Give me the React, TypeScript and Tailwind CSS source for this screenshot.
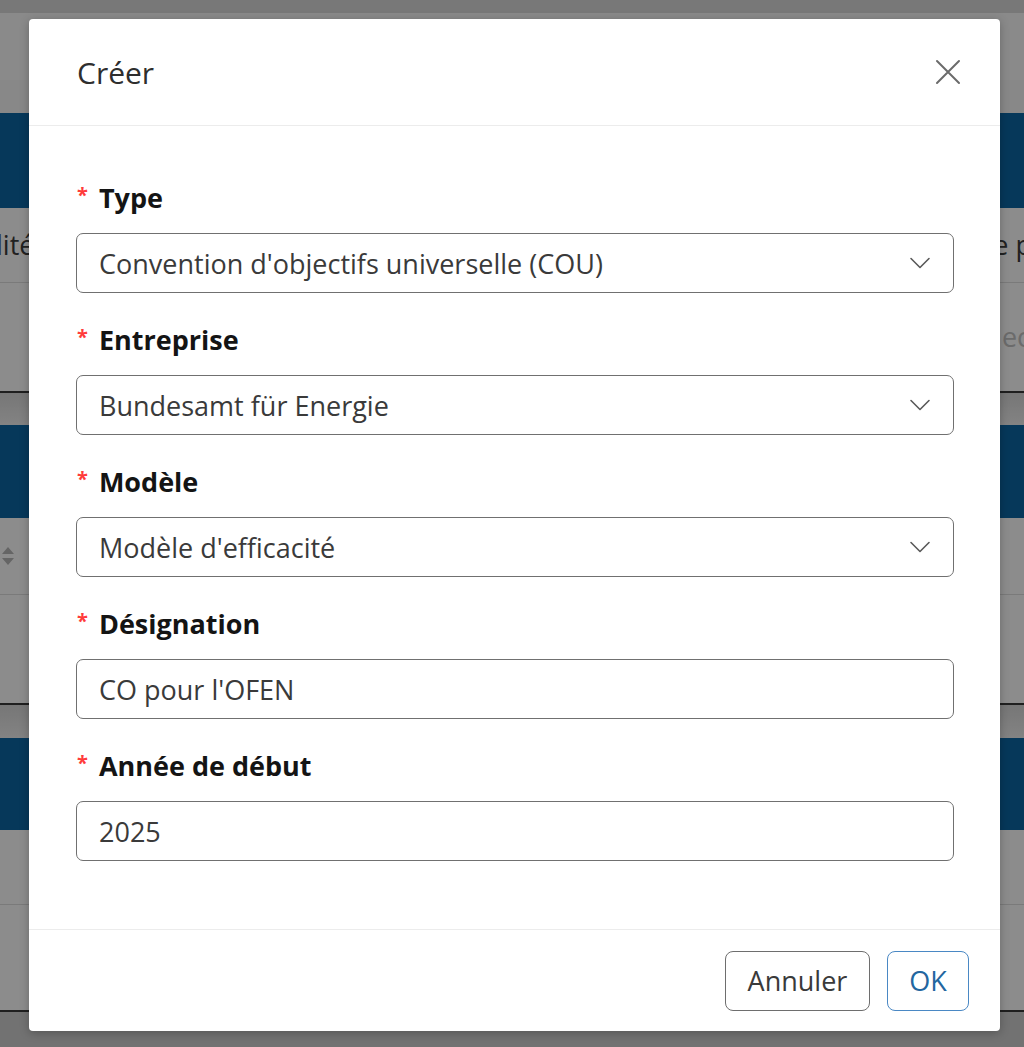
import React from "react";

const font = { fontFamily: '"Open Sans", "Noto Sans", Arial, sans-serif' };

function Chevron() {
  return (
    <svg width="22" height="14" viewBox="0 0 22 14" fill="none" className="shrink-0">
      <path d="M2 2.5 L11 11.5 L20 2.5" stroke="#5a5a5a" strokeWidth="1.6" strokeLinecap="round" strokeLinejoin="round" />
    </svg>
  );
}

function CloseIcon() {
  return (
    <svg width="26" height="26" viewBox="0 0 26 26" fill="none">
      <path d="M2 2 L24 24 M24 2 L2 24" stroke="#6b6b6b" strokeWidth="2" strokeLinecap="round" />
    </svg>
  );
}

function Label({ text }: { text: string }) {
  return (
    <div className="flex h-[36px] items-center">
      <span className="mr-[11px] ml-[1px] -mt-[4px] text-[20px] leading-none font-bold text-[#ff3b3b]">*</span>
      <span className="text-[27px] leading-none font-bold text-[#141414]">{text}</span>
    </div>
  );
}

function Field({ label, value, select }: { label: string; value: string; select?: boolean }) {
  return (
    <div className="flex flex-col gap-[18px]">
      <Label text={label} />
      <div className="flex h-[60px] items-center justify-between rounded-[7px] border-[1.5px] border-[#707070] bg-white pr-[22px] pl-[22px]">
        <span className="text-[27px] leading-none text-[#3a3a3a]">{value}</span>
        {select && <Chevron />}
      </div>
    </div>
  );
}

function Card({ navy, row1, row2, tail, left, right, right2, sort }: { navy: number; row1: number; row2: number; tail: string; left?: string; right?: string; right2?: string; sort?: boolean }) {
  return (
    <div className="flex flex-col">
      <div className="bg-[#0c66a4]" style={{ height: navy }} />
      <div className="flex items-center justify-between border-b border-[#dedede] bg-white" style={{ height: row1 }}>
        <div className="flex items-center">
          {sort && (
            <svg width="14" height="22" viewBox="0 0 14 22" className="ml-[1px]">
              <path d="M7 2 L13 9 H1 Z" fill="#b8b8b8" />
              <path d="M7 20 L13 13 H1 Z" fill="#b8b8b8" />
            </svg>
          )}
          {left && <span className="-ml-[4px] text-[27px] text-[#3c3c3c]">{left}</span>}
        </div>
        {right && <span className="-mr-[8px] text-[27px] text-[#3c3c3c]">{right}</span>}
      </div>
      <div className="flex items-center justify-end bg-white" style={{ height: row2 }}>
        {right2 && <span className="-mr-[6px] text-[27px] text-[#c4c4c4]">{right2}</span>}
      </div>
      <div className={tail} />
    </div>
  );
}

export default function App() {
  return (
    <div className="relative h-[1047px] w-[1024px] overflow-hidden bg-[#f2f2f2]" style={font}>
      {/* page behind the dialog */}
      <div className="flex flex-col">
        <div className="h-[13px] bg-[#dadada]" />
        <div className="h-[67px] bg-[#fbfbfb]" />
        <div className="h-[33px] bg-[#f7f7f7]" />
        <Card navy={95} row1={75} row2={108} left="lité" right="e p" right2="ec" tail="h-[34px] border-t-2 border-[#3a3a3a] bg-gradient-to-b from-[#d8d8d8] to-[#efefef]" />
        <Card navy={93} row1={77} row2={108} sort tail="h-[35px] border-t-2 border-[#3a3a3a] bg-gradient-to-b from-[#d8d8d8] to-[#efefef]" />
        <Card navy={92} row1={75} row2={105} tail="h-[40px] border-t-2 border-[#3a3a3a] bg-[#cfcfcf]" />
      </div>

      {/* backdrop */}
      <div className="absolute inset-0 bg-black/45" />

      {/* dialog */}
      <div className="absolute top-[19px] left-[29px] flex w-[971px] flex-col rounded-[4px] bg-white shadow-[0_2px_10px_rgba(0,0,0,0.25)]">
        <div className="flex h-[107px] items-center justify-between border-b border-[#ececec] pr-[39px] pl-[48px]">
          <h2 className="text-[30px] font-normal text-[#2e2e2e]">Créer</h2>
          <CloseIcon />
        </div>

        <div className="flex flex-col gap-[28px] pt-[53px] pr-[46px] pb-[68px] pl-[47px]">
          <Field label="Type" value="Convention d'objectifs universelle (COU)" select />
          <Field label="Entreprise" value="Bundesamt für Energie" select />
          <Field label="Modèle" value="Modèle d'efficacité" select />
          <Field label="Désignation" value="CO pour l'OFEN" />
          <Field label="Année de début" value="2025" />
        </div>

        <div className="flex items-center justify-end gap-[17px] border-t border-[#ececec] pt-[21px] pr-[31px] pb-[20px]">
          <button className="flex h-[60px] w-[145px] items-center justify-center rounded-[8px] border-[1.5px] border-[#6e6e6e] bg-white text-[27px] text-[#3a3a3a]">
            Annuler
          </button>
          <button className="flex h-[60px] w-[82px] items-center justify-center rounded-[8px] border-[1.5px] border-[#4a88c4] bg-white text-[27px] text-[#23669f]">
            OK
          </button>
        </div>
      </div>
    </div>
  );
}
